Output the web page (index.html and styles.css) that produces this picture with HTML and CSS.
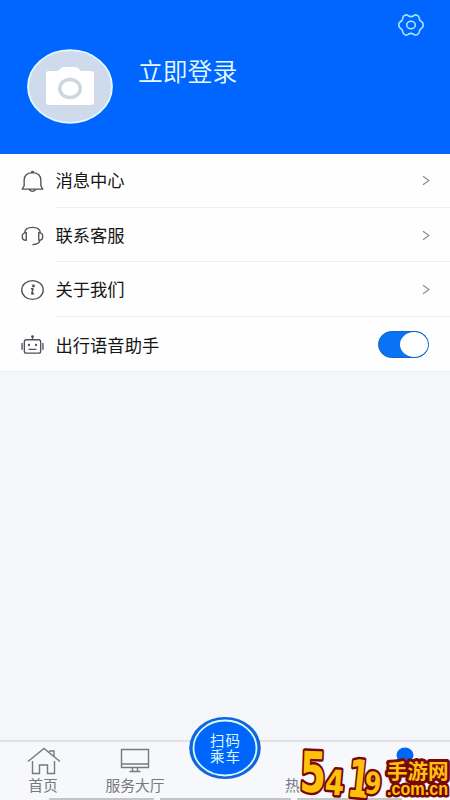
FILE: index.html
```html
<!DOCTYPE html>
<html lang="zh-CN">
<head>
<meta charset="utf-8">
<title>个人中心</title>
<link rel="stylesheet" href="styles.css">
</head>
<body>
<main class="screen">
  <header class="profile">
    <svg class="avatar" width="86" height="75" viewBox="0 0 86 75">
      <ellipse cx="43" cy="37.5" rx="42" ry="36.3" fill="#d0daed" stroke="#e2fbff" stroke-width="1.8"/>
      <path d="M22 22h8c3 0 3-4 7-4h11c4 0 4 4 7 4h9q3 0 3 3v28q0 3-3 3H22q-3 0-3-3V25q0-3 3-3z" fill="#fff"/>
      <ellipse cx="43" cy="39.5" rx="10.3" ry="9" fill="#fff" stroke="#cfd6de" stroke-width="3.4"/>
    </svg>
    <h1 class="login">立即登录</h1>
    <svg class="settings" width="28" height="24" viewBox="0 0 28 24" fill="none" stroke="#a8e5ff" stroke-width="1.6" stroke-linejoin="round">
      <path d="M8 2.2Q10 1.4 11.3 2.8Q14 4.5 16.7 2.8Q18 1.4 20 2.2Q22 3 22.2 5Q22.3 7.5 24.6 8.8Q26.5 10 26.2 12Q26.5 14 24.6 15.2Q22.3 16.5 22.2 19Q22 21 20 21.8Q18 22.6 16.7 21.2Q14 19.5 11.3 21.2Q10 22.6 8 21.8Q6 21 5.8 19Q5.7 16.5 3.4 15.2Q1.5 14 1.8 12Q1.5 10 3.4 8.8Q5.7 7.5 5.8 5Q6 3 8 2.2Z"/>
      <ellipse cx="14" cy="12" rx="4.3" ry="3.8"/>
    </svg>
  </header>
  <section class="menu">
    <div class="row">
      <svg class="icon" viewBox="0 0 24 24"><path d="M3.300 17V11C3.300 6 6.500 3.500 12 3.200c5.500.3 8.700 2.800 8.700 7.800v6l2 3.500H1.300zM8.500 21q3.500 3.500 7 0M10.800 3q1.200-2 2.400 0"/></svg>
      <div class="cell"><span>消息中心</span><svg class="chevron" viewBox="0 0 8 10"><path d="M1 .8 7 5 1 9.2"/></svg></div>
    </div>
    <div class="row">
      <svg class="icon" viewBox="0 0 24 24"><path d="M5.500 8.500v8C2.800 16.500 1.300 15 1.300 12.500S2.800 8.500 5.500 8.500zM3.800 9C4 5 7 3 12 3s8 2 8.200 6M18.500 8.500v8c2.700 0 4.200-1.500 4.200-4s-1.500-4-4.200-4zM20 16.500c-1 3-4 4.500-8 4.500"/></svg>
      <div class="cell"><span>联系客服</span><svg class="chevron" viewBox="0 0 8 10"><path d="M1 .8 7 5 1 9.2"/></svg></div>
    </div>
    <div class="row">
      <svg class="icon" viewBox="0 0 24 24"><ellipse cx="12" cy="12" rx="11.200" ry="9.800"/><path d="M10.300 10.600h2.200l-1.200 5q0 1 2.200-.2" stroke-width="1.600"/><circle cx="13" cy="7.800" r=".8" fill="#50515a"/></svg>
      <div class="cell"><span>关于我们</span><svg class="chevron" viewBox="0 0 8 10"><path d="M1 .8 7 5 1 9.2"/></svg></div>
    </div>
    <div class="row">
      <svg class="icon" viewBox="0 0 24 24"><rect x="3.500" y="6.500" width="17" height="14" rx="2"/><path d="M12 6.500V3.500M1.100 10v7M22.900 10v7M8 16.500h8"/><g fill="#50515a" stroke="none"><circle cx="12" cy="3.200" r="1.500"/><circle cx="8.300" cy="12" r="1.200"/><circle cx="15.700" cy="12" r="1.200"/></g></svg>
      <div class="cell"><span>出行语音助手</span><span class="switch"></span></div>
    </div>
  </section>
  <nav class="tabs">
    <div class="tab home">
      <svg width="34" height="28" viewBox="0 0 34 28"><path d="M1 14.500 17 1.500l16 13M5.500 14v12.500h7V18h8v8.500h7V14M22 4h5v5"/></svg>
      <span>首页</span>
    </div>
    <div class="tab service">
      <svg width="34" height="28" viewBox="0 0 34 28"><path d="M3.500 2.500h27v18h-27zM3.500 17h27M14.500 21v3.500M19.500 21v3.500M11.500 24.500h11"/></svg>
      <span>服务大厅</span>
    </div>
    <div class="tab hot"><span>热</span></div>
    <svg class="scan" width="74" height="64" viewBox="0 0 74 64">
      <ellipse cx="37" cy="32" rx="35.800" ry="31" fill="#1165dc"/>
      <ellipse cx="37" cy="32" rx="31.500" ry="27.500" fill="#0066fb" stroke="#d9faff" stroke-width="1.800"/>
      <text x="37.500" y="30">扫码</text><text x="37.500" y="45.500">乘车</text>
    </svg>
    <svg class="brand" width="160" height="60" viewBox="0 0 160 60">
      <ellipse cx="115" cy="15" rx="8.500" ry="7.500" fill="#0066fb"/>
      <g class="brand-text">
        <text transform="translate(9 51.500) rotate(2) scale(.68 1)" font-size="56">5</text>
        <text transform="translate(34 54) rotate(5) scale(.8 1)" font-size="35">4</text>
        <text transform="translate(56 56) rotate(6) scale(.62 1)" font-size="52">1</text>
        <text transform="translate(74 53) rotate(4) scale(.8 1)" font-size="30">9</text>
        <text class="brand-cn" x="97" y="38.500">手游网</text>
        <text class="brand-url" x="97" y="54.500" textLength="61" lengthAdjust="spacingAndGlyphs">.com.cn</text>
      </g>
    </svg>
    <div class="bottom-line"><i></i><i></i><i></i></div>
  </nav>
</main>
</body>
</html>
```
FILE: styles.css
```css
* { box-sizing: border-box; }
body { margin: 0; font-family: "Noto Sans CJK SC", sans-serif; }
.screen { width: 450px; height: 800px; display: flex; flex-direction: column; background: #f4f6f9; overflow: hidden; }
.profile { height: 153.500px; flex: none; display: flex; align-items: flex-start; padding: 0 25px 0 27px; background: #0066ff; }
.avatar { margin-top: 49px; }
.login { margin: 52px 0 0 25px; color: #e7fcff; font-size: 24.800px; line-height: 36px; font-weight: 350; }
.settings { margin: 13px 0 0 auto; }
.menu { flex: none; height: 218px; background: #fefefe; border-bottom: 1px solid #eef0f2; }
.row { display: flex; align-items: center; height: 54.400px; padding-left: 21px; }
.icon { width: 23px; height: 24px; fill: none; stroke: #50515a; stroke-width: 1.400; stroke-linejoin: round; margin-right: 11.500px; }
.row:not(:first-child) .icon { margin-top: 2px; }
.cell { flex: 1; height: 100%; display: flex; align-items: center; justify-content: space-between; padding-right: 20px; font-size: 17.300px; color: #151515; border-bottom: 1px solid #edeef0; }
.row:first-child span { margin-top: -1px; }
.row:last-child .cell { border: 0; padding-top: 1px; }
.row:not(:first-child) .chevron { margin-top: 2px; }
.chevron { width: 8px; height: 11px; fill: none; stroke: #938c91; stroke-width: 1.300; }
.switch { width: 51px; height: 27px; border-radius: 14px; background: #0873f4; border: 1px solid #1265bd; display: flex; justify-content: flex-end; margin-right: 1px; }
.switch::after { content: ""; width: 28px; height: 25px; border-radius: 50%; background: #fff; }
.tabs { margin-top: auto; height: 60px; flex: none; position: relative; display: flex; border-top: 2px solid #dfe1e4; background: #f7f8fb; }
.tab { height: 58px; display: flex; flex-direction: column; align-items: center; color: #77797c; font-size: 14.800px; line-height: 20px; padding-top: 5px; white-space: nowrap; }
.tab svg { fill: none; stroke: #77797c; stroke-width: 1.400; }
.home { width: 88px; }
.home span { margin-right: 2px; }
.service { width: 94px; }
.tab.hot { margin-left: 103px; padding-top: 33px; }
.scan { position: absolute; left: 188px; top: -26px; }
.scan text { font-size: 14.500px; fill: #d9faff; text-anchor: middle; letter-spacing: 1px; }
.brand { position: absolute; left: 290px; top: -2px; z-index: 2; }
.brand-text { font-family: "DejaVu Sans", sans-serif; font-weight: 700; fill: #ffc20c; stroke: #760808; stroke-width: 5px; paint-order: stroke; stroke-linejoin: round; }
.brand-cn { font-family: "Noto Sans CJK SC", sans-serif; font-size: 20.500px; stroke-width: 6px; }
.brand-url { font-family: "Liberation Sans", sans-serif; font-size: 18px; }
.bottom-line { position: absolute; bottom: 0; left: 49px; right: 0; display: flex; gap: 6px; }
.bottom-line i { height: 2px; width: 105px; background: #c4c5c7; }
.bottom-line i:nth-child(2) { width: 131px; }
```
